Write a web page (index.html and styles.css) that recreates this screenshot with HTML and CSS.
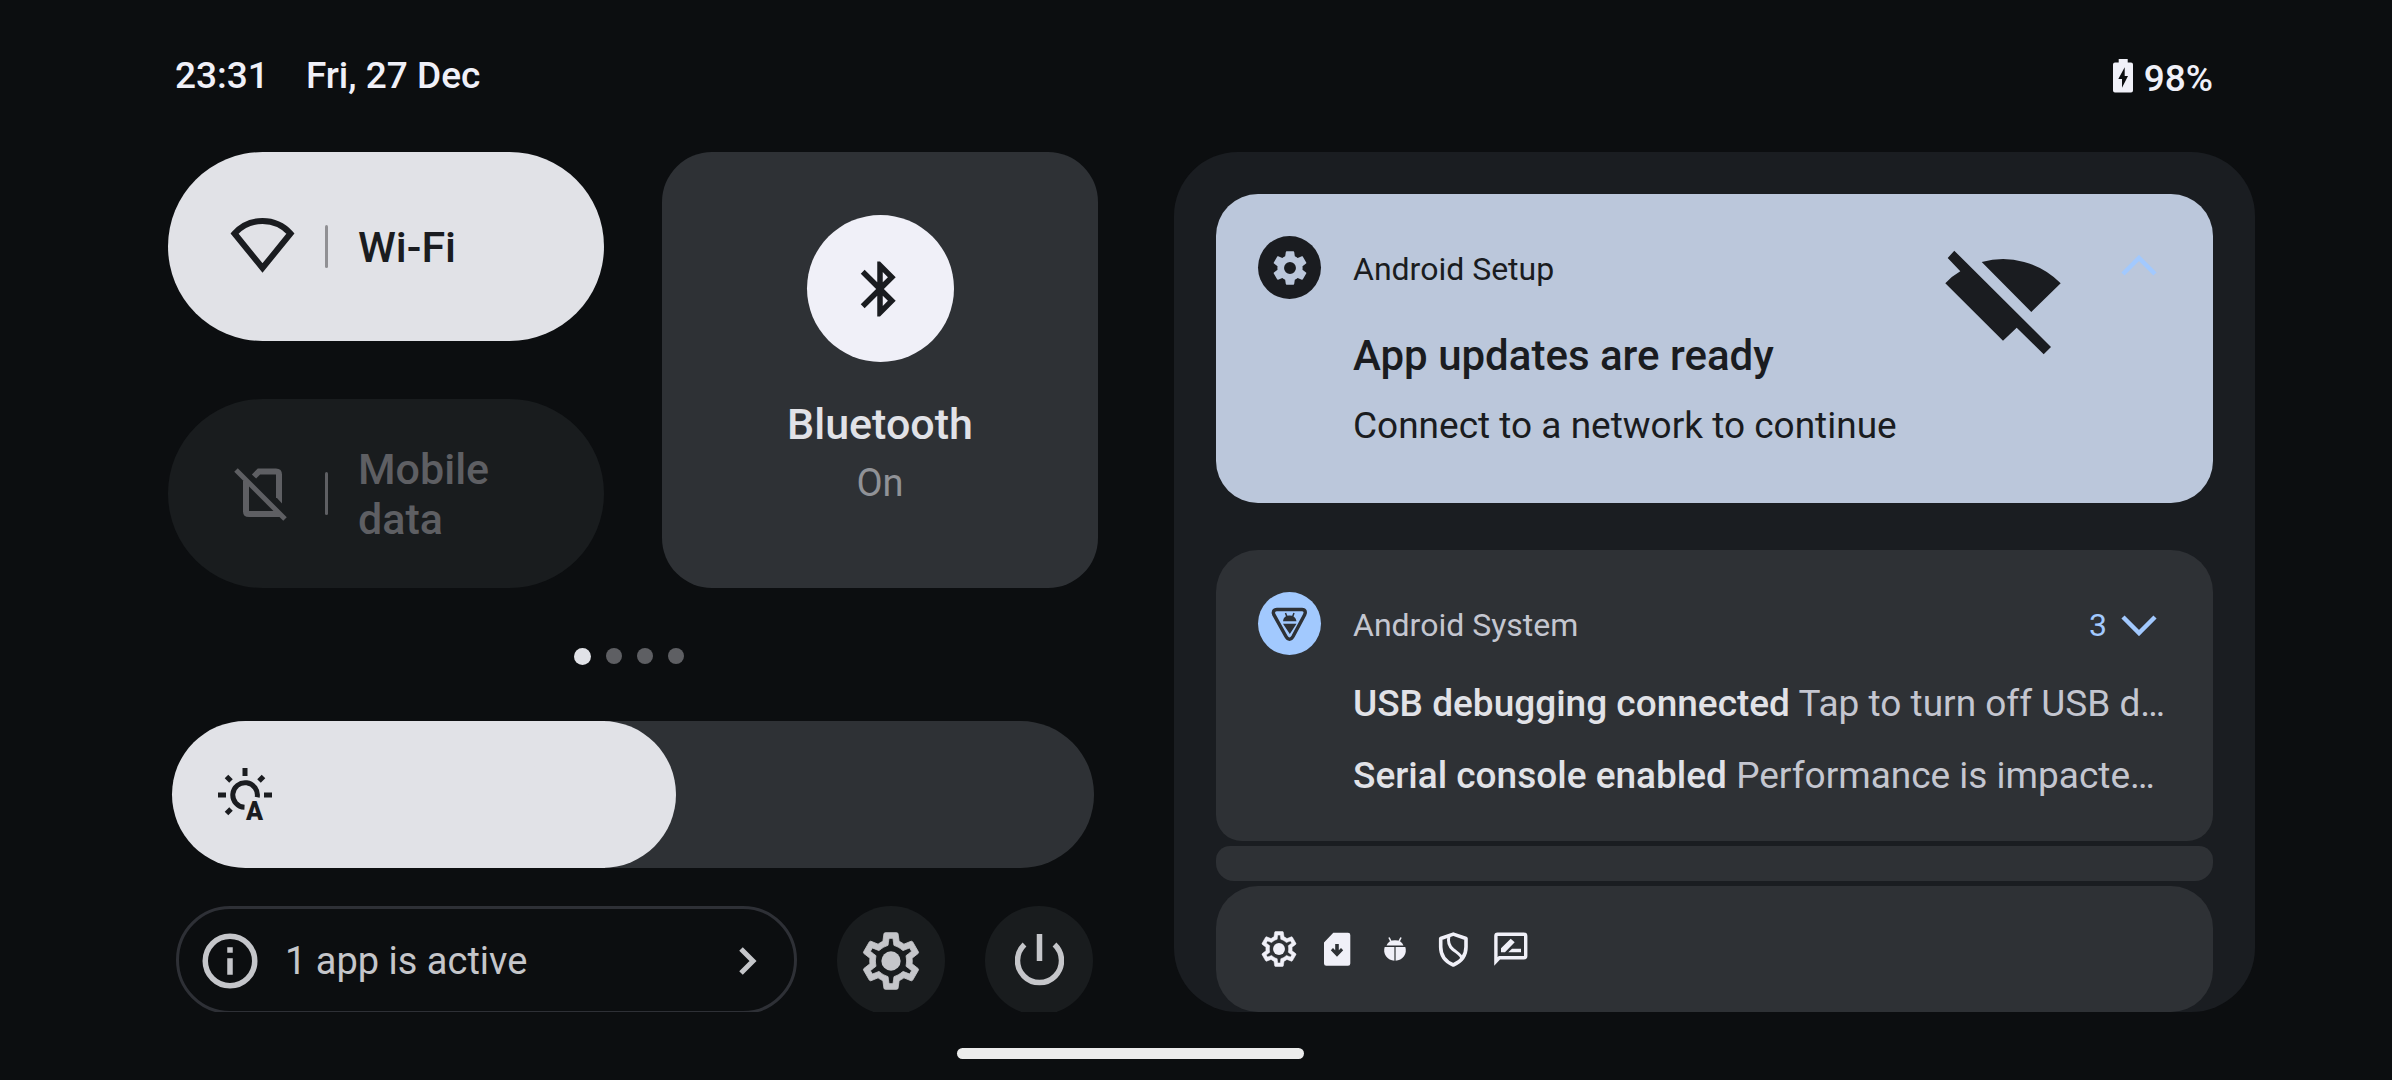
FILE: index.html
```html
<!DOCTYPE html>
<html lang="en">
<head>
<meta charset="utf-8">
<meta name="viewport" content="width=device-width, initial-scale=1">
<title>Quick settings</title>
<link rel="stylesheet" href="styles.css">
</head>
<body>
<svg class="defs" width="0" height="0" aria-hidden="true">
  <symbol id="gear-outline" viewBox="0 0 24 24">
    <path stroke="currentColor" stroke-width=".3" d="M19.43 12.98c.04-.32.07-.64.07-.98s-.03-.66-.07-.98l2.11-1.65c.19-.15.24-.42.12-.64l-2-3.46c-.09-.16-.26-.25-.44-.25-.06 0-.12.01-.17.03l-2.49 1c-.52-.4-1.08-.73-1.69-.98l-.38-2.65C14.46 2.18 14.25 2 14 2h-4c-.25 0-.46.18-.49.42l-.38 2.65c-.61.25-1.17.59-1.69.98l-2.49-1c-.06-.02-.12-.03-.18-.03-.17 0-.34.09-.43.25l-2 3.46c-.13.22-.07.49.12.64l2.11 1.65c-.04.32-.07.65-.07.98s.03.66.07.98l-2.11 1.65c-.19.15-.24.42-.12.64l2 3.46c.09.16.26.25.44.25.06 0 .12-.01.17-.03l2.49-1c.52.4 1.08.73 1.69.98l.38 2.65c.03.24.24.42.49.42h4c.25 0 .46-.18.49-.42l.38-2.65c.61-.25 1.17-.59 1.69-.98l2.49 1c.06.02.12.03.18.03.17 0 .34-.09.43-.25l2-3.46c.12-.22.07-.49-.12-.64l-2.11-1.65zm-1.98-1.71c.04.31.05.52.05.73 0 .21-.02.43-.05.73l-.14 1.13.89.7 1.08.84-.7 1.21-1.27-.51-1.04-.42-.9.68c-.43.32-.84.56-1.25.73l-1.06.43-.16 1.13-.2 1.35h-1.4l-.19-1.35-.16-1.13-1.06-.43c-.43-.18-.83-.41-1.23-.71l-.91-.7-1.06.43-1.27.51-.7-1.21 1.08-.84.89-.7-.14-1.13c-.03-.31-.05-.54-.05-.74s.02-.43.05-.73l.14-1.13-.89-.7-1.08-.84.7-1.21 1.27.51 1.04.42.9-.68c.43-.32.84-.56 1.25-.73l1.06-.43.16-1.13.2-1.35h1.39l.19 1.35.16 1.13 1.06.43c.43.18.83.41 1.23.71l.91.7 1.06-.43 1.27-.51.7 1.21-1.07.85-.89.7.14 1.13z"/>
    <circle cx="12" cy="12" r="3.4"/>
  </symbol>
</svg>

<header class="status">
  <div class="status-start">
    <time>23:31</time>
    <span>Fri, 27 Dec</span>
  </div>
  <div class="status-end">
    <svg width="20" height="34" viewBox="0 0 20 34" aria-hidden="true">
      <path fill="currentColor" fill-rule="evenodd" d="M5.7 0h9v3.5H18a2 2 0 0 1 2 2v26a2 2 0 0 1-2 2H2a2 2 0 0 1-2-2v-26a2 2 0 0 1 2-2h3.700zM11.700 8.300 5.300 20H9v8.700L15 17h-3.300z"/>
    </svg>
    <span>98%</span>
  </div>
</header>

<main class="shade">
  <section class="quick" aria-label="Quick settings">
    <div class="tiles">
      <button class="tile tile-on" type="button">
        <svg class="tile-icon" viewBox="0 0 66 66" aria-hidden="true"><path d="M4.500 19.500A37.600 37.600 0 0 1 60.500 19.500L32.500 54Z" fill="none" stroke="currentColor" stroke-width="6"/></svg>
        <span class="tile-rule"></span>
        <span class="tile-label">Wi-Fi</span>
      </button>
      <button class="tile tile-off" type="button" disabled>
        <svg class="tile-icon" viewBox="0 0 66 66" aria-hidden="true"><g transform="translate(4 7)" fill="none" stroke="currentColor"><path stroke-width="5" d="M2 2 51 51"/><path stroke-width="6" d="M12 13V43.500Q12 46 15 46H46M20 8.500 25 3.500H42Q45 3.500 45 6.500V30"/><path fill="currentColor" stroke="none" d="M42 29H48V35.500Z"/></g></svg>
        <span class="tile-rule"></span>
        <span class="tile-label">Mobile data</span>
      </button>
      <button class="tile-large" type="button">
        <span class="disc">
          <svg width="66" height="66" viewBox="0 0 24 24" fill="currentColor" aria-hidden="true"><path d="M17.710 7.710L12 2h-1v7.590L6.410 5 5 6.410 10.590 12 5 17.590 6.410 19 11 14.410V22h1l5.710-5.710-4.300-4.290 4.300-4.290zM13 5.830l1.880 1.880L13 9.590V5.830zm1.880 10.460L13 18.170v-3.760l1.880 1.880z"/></svg>
        </span>
        <span class="tile-label">Bluetooth</span>
        <span class="tile-state">On</span>
      </button>
    </div>

    <div class="pager" aria-hidden="true">
      <span class="dot dot-current"></span><span class="dot"></span><span class="dot"></span><span class="dot"></span>
    </div>

    <div class="brightness">
      <input id="brightness" type="range" min="0" max="100" value="46" aria-label="Brightness">
      <svg class="brightness-icon" width="54" height="54" viewBox="0 0 54 54" aria-hidden="true">
        <g fill="none" stroke="currentColor" stroke-width="5">
          <path d="M39.200 29.200A12.300 12.300 0 1 0 26.500 39.300"/>
          <path d="M27 0V8M0 27H8M46 27H54M8.500 8.500 13 13M45.500 8.500 41 13M8.500 45.500 13 41"/>
        </g>
        <text x="36.500" y="52" text-anchor="middle" class="auto-letter">A</text>
      </svg>
    </div>

    <div class="footer">
      <button class="active-apps" type="button">
        <svg width="66" height="66" viewBox="0 0 24 24" aria-hidden="true"><circle cx="12" cy="12" r="9" fill="none" stroke="currentColor" stroke-width="2"/><path fill="currentColor" d="M11 7h2v2h-2zM11 11h2v6h-2z"/></svg>
        <span class="active-label">1 app is active</span>
        <svg width="18" height="28" viewBox="0 0 18 28" aria-hidden="true"><path d="M2 2 14 14 2 26" fill="none" stroke="currentColor" stroke-width="5"/></svg>
      </button>
      <button class="round" type="button" aria-label="Settings">
        <svg width="68" height="68" fill="currentColor" aria-hidden="true"><use href="#gear-outline"/></svg>
      </button>
      <button class="round" type="button" aria-label="Power">
        <svg width="49" height="54" viewBox="0 0 49 54" aria-hidden="true"><path d="M24.500 0V27M9.500 10.500A22 22 0 1 0 39.500 10.500" fill="none" stroke="currentColor" stroke-width="5.500"/></svg>
      </button>
    </div>
  </section>

  <section class="notifications" aria-label="Notifications">
    <article class="card card-setup">
      <span class="badge badge-dark">
        <svg width="42" height="42" viewBox="0 0 24 24" fill="currentColor" aria-hidden="true"><path d="M19.140 12.940c.04-.3.06-.61.06-.94 0-.32-.02-.64-.07-.94l2.030-1.580c.18-.14.23-.41.12-.61l-1.920-3.320c-.12-.22-.37-.29-.59-.22l-2.390.96c-.5-.38-1.030-.7-1.620-.94l-.36-2.540c-.04-.24-.24-.41-.48-.41h-3.840c-.24 0-.43.17-.47.41l-.36 2.540c-.59.24-1.130.57-1.620.94l-2.390-.96c-.22-.08-.47 0-.59.22L2.740 8.870c-.12.21-.08.47.12.61l2.030 1.580c-.05.3-.09.63-.09.94s.02.64.07.94l-2.030 1.580c-.18.14-.23.41-.12.61l1.920 3.320c.12.22.37.29.59.22l2.390-.96c.5.38 1.030.7 1.620.94l.36 2.540c.05.24.24.41.48.41h3.840c.24 0 .44-.17.47-.41l.36-2.540c.59-.24 1.130-.56 1.620-.94l2.390.96c.22.08.47 0 .59-.22l1.920-3.320c.12-.22.07-.47-.12-.61l-2.010-1.580zM12 15.400a3.400 3.400 0 1 1 0-6.800 3.400 3.400 0 0 1 0 6.800z"/></svg>
      </span>
      <div class="card-body">
        <p class="app-name">Android Setup</p>
        <h2 class="card-title">App updates are ready</h2>
        <p class="card-text">Connect to a network to continue</p>
      </div>
      <svg class="card-art" width="116" height="105" viewBox="0 0 116 105" fill="currentColor" aria-hidden="true"><path d="M9.300.7 2.700 8 15.300 21.300Q7 26 .3 33.300L58 90.700 71.700 77.700 98.700 104.300 106 97ZM36.700 12A80.700 80.700 0 0 1 115.700 33.300L86.300 62Z"/></svg>
      <button class="expand" type="button" aria-label="Collapse">
        <svg width="36" height="22" viewBox="0 0 36 22" aria-hidden="true"><path d="M2 19 18 3 34 19" fill="none" stroke="currentColor" stroke-width="4.500"/></svg>
      </button>
    </article>

    <article class="card card-system">
      <span class="badge badge-blue">
        <svg width="63" height="63" viewBox="0 0 63 63" aria-hidden="true">
          <path d="M19 17.500H44C47.500 17.500 48 20.500 46.500 23L35 44.500C33 48 30 48 28 44.500L16 23C14.500 20.500 15.500 17.500 19 17.500Z" fill="none" stroke="currentColor" stroke-width="3.500"/>
          <path d="M25 29.300Q25.500 23.500 31.500 23.500T38.500 29.300ZM25 31.800H38.500L31.800 42Z" fill="currentColor"/>
          <path d="M27.500 21 29 25M36 21 34.500 25" stroke="currentColor" stroke-width="1.500"/>
        </svg>
      </span>
      <div class="card-body">
        <div class="card-head">
          <p class="app-name">Android System</p>
          <button class="expand" type="button" aria-label="Expand 3 notifications">
            <span>3</span>
            <svg width="36" height="22" viewBox="0 0 36 22" aria-hidden="true"><path d="M2 3 18 19 34 3" fill="none" stroke="currentColor" stroke-width="4.500"/></svg>
          </button>
        </div>
        <p class="line"><strong>USB debugging connected</strong> <span>Tap to turn off USB d…</span></p>
        <p class="line"><strong>Serial console enabled</strong> <span>Performance is impacte…</span></p>
      </div>
    </article>

    <div class="card card-peek"></div>

    <div class="card card-shelf">
      <svg viewBox="0 0 24 24" fill="currentColor" aria-hidden="true"><use href="#gear-outline"/></svg>
      <svg viewBox="0 0 42 42" aria-hidden="true"><path fill="currentColor" fill-rule="evenodd" d="M17.300 4.700H32a2.300 2.300 0 0 1 2.300 2.300V35.400a2.300 2.300 0 0 1-2.300 2.300H10.300A2.300 2.300 0 0 1 8 35.400V14.500ZM19.200 16V22.200L17 20 14.800 22.200 21 28.700 27.200 22.200 25 20 22.800 22.200V16Z"/></svg>
      <svg viewBox="0 0 42 42" fill="currentColor" aria-hidden="true"><path d="M12.500 17.600Q14.500 12.300 21 12.300T29.500 17.600ZM10.700 19H20.400V32.700A10.300 10.300 0 0 1 10.700 19ZM21.600 19H31.300A10.300 10.300 0 0 1 21.600 32.700Z"/><path d="M15 9.500 17 13.500M27 9.500 25 13.500" stroke="currentColor" stroke-width="1.600"/></svg>
      <svg viewBox="0 0 42 42" fill="none" stroke="currentColor" stroke-width="3.600" aria-hidden="true"><path d="M21.300 6.100 34 10.500V19C34 27 29.500 33.500 21.300 37 13 33.500 8.700 27 8.700 19V10.500Z" stroke-linejoin="round"/><path stroke-width="3" d="M17 8C15.500 14 17 18 21 21.500 26 25.500 29.500 27 30 31"/></svg>
      <svg viewBox="0 0 42 42" aria-hidden="true"><path fill="none" stroke="currentColor" stroke-width="3.400" d="M5.900 33.500V8Q5.900 6.300 7.600 6.300H34Q35.700 6.300 35.700 8V28Q35.700 29.700 34 29.700H9.500Z"/><path fill="currentColor" d="M11 24.300V20.300L20.700 10.700 24.700 14.300 15 24.300ZM18.300 24.300 22 20.700H31V24.300Z"/></svg>
    </div>
  </section>
</main>

<div class="home-bar"></div>
</body>
</html>
```
FILE: styles.css
```css
* {
  box-sizing: border-box;
}

body {
  margin: 0;
  min-height: 100vh;
  background: #0c0e10;
  color: #e1e2e7;
  font-family: Roboto, "Liberation Sans", sans-serif;
  font-size: 37px;
  line-height: 44px;
}

button {
  margin: 0;
  padding: 0;
  border: 0;
  background: none;
  color: inherit;
  font: inherit;
  text-align: left;
}

p,
h2 {
  margin: 0;
}

svg {
  display: block;
  flex: none;
}

.defs {
  position: absolute;
}

.status {
  display: flex;
  justify-content: space-between;
  padding: 54px 179px 51px 175px;
  color: #f0f0f8;
  font-weight: 500;
}

.status-start {
  display: flex;
  gap: 37px;
}

.status-end {
  display: flex;
  align-items: center;
  gap: 11px;
  padding-top: 3px;
}

.status-end svg {
  margin-bottom: 6px;
}

.shade {
  display: grid;
  grid-template-columns: minmax(0, 930fr) minmax(0, 1081fr);
  gap: 76px;
  padding: 0 137px 0 168px;
}

.tiles {
  display: grid;
  grid-template-columns: 1fr 1fr;
  gap: 58px;
}

.tile {
  display: flex;
  align-items: center;
  min-height: 189px;
  padding: 0 62px;
  border-radius: 95px;
}

.tile-on {
  background: #e1e2e7;
  color: #1a1c20;
}

.tile-off {
  grid-column: 1;
  background: #191c1e;
  color: #5e5f63;
}

.tile-icon {
  width: 66px;
  height: 66px;
}

.tile-rule {
  flex: none;
  width: 3px;
  height: 43px;
  margin: 0 30px 0 29px;
  border-radius: 2px;
  background: #909094;
}

.tile-off .tile-rule {
  background: #5e5f63;
}

.tile-label {
  font-size: 43px;
  font-weight: 500;
  line-height: 50px;
}

.tile-large {
  display: flex;
  flex-direction: column;
  grid-column: 2;
  grid-row: 1 / 3;
  align-items: center;
  padding-top: 63px;
  border-radius: 50px;
  background: #2e3135;
}

.disc {
  display: grid;
  place-items: center;
  width: 147px;
  height: 147px;
  margin-bottom: 37px;
  border-radius: 50%;
  background: #f0f0f8;
  color: #1a1c20;
}

.tile-state {
  margin-top: 12px;
  color: #909297;
  font-size: 38px;
}

.pager {
  display: flex;
  justify-content: center;
  gap: 15px;
  padding: 60px 9px 56px 0;
}

.dot {
  width: 16px;
  height: 16px;
  border-radius: 50%;
  background: #5e5f63;
}

.dot-current {
  width: 17px;
  height: 17px;
  background: #e1e2e7;
}

.brightness {
  position: relative;
  margin: 0 4px;
}

.brightness input {
  display: block;
  width: 100%;
  height: 147px;
  margin: 0;
  border-radius: 74px;
  background: linear-gradient(to right, #e1e2e7 47%, #2e3135 47%);
  appearance: none;
}

.brightness input::-webkit-slider-thumb {
  width: 147px;
  height: 147px;
  border-radius: 50%;
  background: #e1e2e7;
  appearance: none;
}

.brightness-icon {
  position: absolute;
  top: 47px;
  left: 46px;
  overflow: visible;
  color: #1a1c20;
  pointer-events: none;
}

.auto-letter {
  fill: currentColor;
  font-size: 25px;
  font-weight: 900;
}

.footer {
  display: flex;
  gap: 40px;
  height: 106px;
  margin-top: 38px;
  padding: 0 5px 0 8px;
  overflow: hidden;
  color: #c5c6ca;
}

.active-apps {
  display: flex;
  flex: 1;
  align-items: center;
  height: 108px;
  padding: 1px 37px 0 18px;
  border: 3px solid #2e3036;
  border-radius: 54px;
}

.active-label {
  flex: 1;
  margin-left: 22px;
  font-size: 38px;
}

.round {
  display: grid;
  place-items: center;
  width: 108px;
  height: 109px;
  border-radius: 50%;
  background: #191c1e;
}

.notifications {
  padding: 42px 42px 0;
  border-radius: 64px;
  background: #1a1d21;
}

.card {
  display: flex;
  border-radius: 42px;
  background: #2e3135;
}

.card-setup {
  padding: 42px 56px 55px 42px;
  background: #bbc7db;
  color: #1a1c20;
}

.badge {
  display: grid;
  flex: none;
  place-items: center;
  width: 63px;
  height: 63px;
  margin-right: 32px;
  border-radius: 50%;
}

.badge-dark {
  background: #1a1c20;
  color: #bbc7db;
}

.badge-blue {
  background: #a2c9fe;
  color: #2e3135;
}

.card-body {
  flex: 1;
  min-width: 0;
}

.app-name {
  padding: 12px 0 10px;
  font-size: 32px;
  line-height: 42px;
}

.card-title {
  margin: 31px 0 23px;
  font-size: 42px;
  font-weight: 500;
  line-height: 50px;
}

.card-art {
  margin: 14px 60px 0 0;
}

.expand {
  display: flex;
  align-self: flex-start;
  align-items: center;
  gap: 14px;
  height: 42px;
  color: #a2c9fe;
  font-size: 32px;
}

.card-setup .expand {
  margin-top: 9px;
}

.card-system {
  margin-top: 47px;
  padding: 42px 42px 43px;
  border-radius: 42px 42px 26px 26px;
}

.card-head {
  display: flex;
  justify-content: space-between;
  margin-bottom: 26px;
  color: #c4c6d0;
}

.card-head .expand {
  margin: 12px 14px 0 0;
}

.line {
  margin-bottom: 28px;
  overflow: hidden;
  color: #c4c6d0;
  text-overflow: ellipsis;
  white-space: nowrap;
}

.line:last-child {
  margin-bottom: 0;
}

.line strong {
  color: #e1e2e7;
  font-weight: 500;
}

.card-peek {
  height: 35px;
  margin: 5px 0;
  border-radius: 14px 14px 18px 18px;
}

.card-shelf {
  gap: 16px;
  padding: 42px;
  color: #f0f0f8;
}

.card-shelf svg {
  width: 42px;
  height: 42px;
}

.home-bar {
  width: 347px;
  height: 11px;
  margin: 36px 0 0 40%;
  border-radius: 6px;
  background: #ececec;
}
```
